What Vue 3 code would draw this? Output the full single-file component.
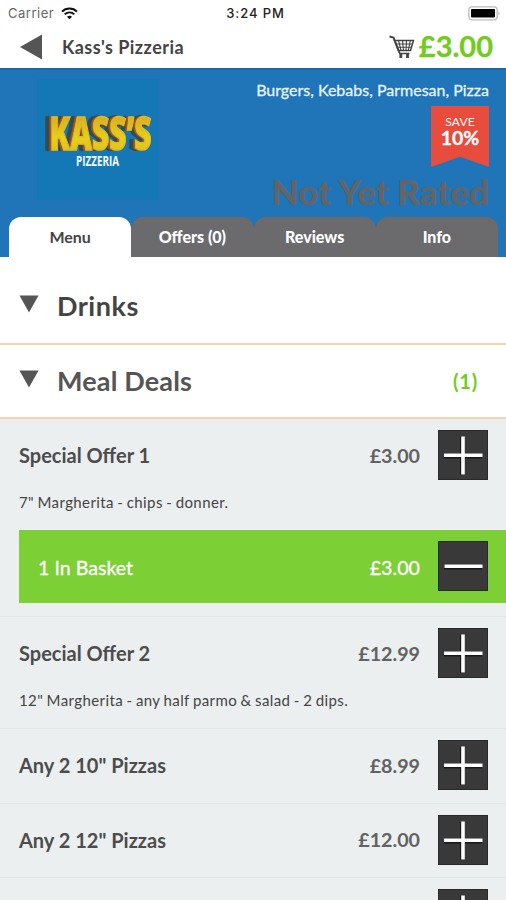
<script setup>
const tabs = ['Menu', 'Offers (0)', 'Reviews', 'Info']
const items = [
  { name: 'Special Offer 1', price: '£3.00', desc: '7" Margherita - chips - donner.', basket: 1 },
  { name: 'Special Offer 2', price: '£12.99', desc: '12" Margherita - any half parmo & salad - 2 dips.' },
  { name: 'Any 2 10" Pizzas', price: '£8.99' },
  { name: 'Any 2 12" Pizzas', price: '£12.00' },
  { name: '', price: '' },
]
</script>

<template>
  <div class="screen">
    <div class="status">
      <div class="carrier">
        <span>Carrier</span>
        <svg width="17" height="13" viewBox="0 0 17 13" fill="none" stroke="#111" stroke-width="2">
          <path d="M1 4.6C5 .4 12 .4 16 4.6" />
          <path d="M3.7 7.4c2.8-2.7 6.8-2.7 9.6 0" />
          <path d="M8.5 12.2 6 9.7c1.5-1.3 3.5-1.3 5 0z" fill="#111" stroke="none" />
        </svg>
      </div>
      <span class="time">3:24 PM</span>
      <svg class="battery" width="33" height="15" viewBox="0 0 33 15">
        <rect x=".8" y=".8" width="28.4" height="13" rx="3" fill="#fff" stroke="#bbb" stroke-width="1.3" />
        <rect x="3" y="3" width="24" height="8.6" rx="1" fill="#000" />
        <path d="M30.5 5.2q2 2 0 4z" fill="#aaa" />
      </svg>
    </div>

    <header class="nav">
      <svg width="24" height="26" viewBox="0 0 24 26"><path d="M1 13 23 .5v25z" fill="#555" /></svg>
      <h1>Kass's Pizzeria</h1>
      <svg class="cart" width="26" height="24" viewBox="0 0 26 24" fill="none" stroke="#444">
        <path d="M.5 1.5 4.5 2.5 10.5 18" stroke-width="2" />
        <path d="M5.5 5.5H24.5L21.5 15.5H9.5Z" stroke-width="1.5" />
        <path d="M6.5 9H23.5M8 12.3H22.5M9.5 5.5l2.5 10M13.5 5.5l1 10M17.5 5.5l-.5 10M21.3 5.5l-2 10" stroke-width="1.1" />
        <path d="M10 18.5H20.5" stroke-width="1.5" />
        <path d="M11.8 18.500v4.500M18.500 18.500v4.500" stroke-width="2.800" />
      </svg>
      <span class="total">£3.00</span>
    </header>

    <section class="hero">
      <div class="hero-top">
        <svg class="logo" width="121" height="121" viewBox="0 0 121 121">
          <defs>
            <linearGradient id="gold" x1="0" y1="0" x2="0" y2="1">
              <stop offset=".2" stop-color="#d9a823" />
              <stop offset=".6" stop-color="#e6cf1d" />
              <stop offset="1" stop-color="#dcb41f" />
            </linearGradient>
          </defs>
          <rect width="121" height="121" fill="#1478b6" />
          <text x="12.500" y="71" textLength="102" lengthAdjust="spacingAndGlyphs" class="kass">KASS’S</text>
          <text x="39" y="87" textLength="43" lengthAdjust="spacingAndGlyphs" class="sub">PIZZERIA</text>
        </svg>
        <div class="info">
          <p class="cuisine">Burgers, Kebabs, Parmesan, Pizza</p>
          <div class="ribbon"><span>SAVE</span><b>10%</b></div>
          <p class="rating">Not Yet Rated</p>
        </div>
      </div>
      <nav class="tabs">
        <div v-for="(t, i) in tabs" :key="t" class="tab" :class="{ active: i === 0 }"><span>{{ t }}</span></div>
      </nav>
    </section>

    <section class="category first">
      <svg width="20" height="18" viewBox="0 0 20 18"><path d="M.5.5h19L10 17.5z" fill="#555" /></svg>
      <h2 class="drinks">Drinks</h2>
    </section>
    <section class="category">
      <svg width="20" height="18" viewBox="0 0 20 18"><path d="M.5.5h19L10 17.5z" fill="#555" /></svg>
      <h2 class="deals">Meal Deals</h2>
      <span class="count">(1)</span>
    </section>

    <article v-for="(item, i) in items" :key="i" class="item">
      <div class="line">
        <h3>{{ item.name }}</h3>
        <span class="price">{{ item.price }}</span>
        <span class="btn">
          <svg width="50" height="50" viewBox="0 0 50 50"><path d="M6 26H44M24.5 7V45" stroke="#191919" stroke-width="5" /><path d="M6 25.3H44.5M25 6.5V44.5" stroke="#fff" stroke-width="3.6" /></svg>
        </span>
      </div>
      <p v-if="item.desc" class="desc">{{ item.desc }}</p>
      <div v-if="item.basket" class="basket">
        <span class="in">{{ item.basket }} In Basket</span>
        <span class="price">£3.00</span>
        <span class="btn">
          <svg width="50" height="50" viewBox="0 0 50 50"><path d="M6 26H44" stroke="#191919" stroke-width="5" /><path d="M6.5 25.3H44.5" stroke="#fff" stroke-width="3.6" /></svg>
        </span>
      </div>
    </article>
  </div>
</template>

<style>
body { margin: 0; overflow: hidden; }
</style>

<style scoped>
.screen { width: 506px; height: 900px; overflow: hidden; background: #fff; font-family: Lato, sans-serif; color: #444; }
svg { display: block; flex: none; }
h1, h2, h3, p { margin: 0; }
span, h1, h2, h3, p { white-space: nowrap; }
.status { height: 26px; display: grid; grid-template-columns: 1fr auto 1fr; align-items: center; padding: 0 5px 0 8px; box-sizing: border-box; font-family: Inter, sans-serif; font-size: 13px; }
.carrier { display: flex; align-items: center; gap: 7px; color: #666; letter-spacing: .5px; }
.time { color: #222; font-weight: 500; letter-spacing: .9px; padding-left: 2px; }
.battery { justify-self: end; }
.nav { height: 42px; display: flex; align-items: center; padding: 0 13px 0 19px; box-sizing: border-box; }
.nav h1 { margin-left: 19px; font-size: 18px; letter-spacing: .45px; font-weight: 700; flex: 1; }
.cart { margin-right: 4px; }
.total { font-size: 29px; line-height: 34px; padding-bottom: 2px; font-weight: 700; color: #72cc20; -webkit-text-stroke: .3px #72cc20; }
.hero { height: 189px; background: #1f75b7; box-sizing: border-box; border-top: 2px solid #116ba8; }
.hero-top { height: 147px; display: flex; justify-content: space-between; padding: 0 17px 0 37px; }
.logo { margin-top: 9px; }
.kass {
  font-family: "Open Sans", sans-serif; font-weight: 800; font-size: 46px; fill: url(#gold); stroke: #dfbb20; stroke-width: 1.4px;
  filter: drop-shadow(-1px .3px 0 #a95b18) drop-shadow(-1px .3px 0 #8d5420) drop-shadow(-2px .7px 0 #344b50) drop-shadow(-2px .7px 0 #344b50);
}
.sub { font-family: "Open Sans", sans-serif; font-weight: 700; font-size: 15px; fill: #f2f8ff; }
.info { display: flex; flex-direction: column; align-items: flex-end; color: #fff; }
.cuisine { margin-top: 10px; font-size: 16px; line-height: 20px; color: #e8f3fc; -webkit-text-stroke: .3px #e8f3fc; }
.ribbon { margin-top: 6px; width: 58px; height: 61px; background: #e74c3c; clip-path: polygon(0 0, 100% 0, 100% 100%, 50% 83%, 0 100%); display: flex; flex-direction: column; align-items: center; padding-top: 8px; box-sizing: border-box; }
.ribbon span { font-size: 12px; line-height: 16px; letter-spacing: .2px; }
.ribbon b { font-size: 19.5px; line-height: 16px; font-weight: 700; -webkit-text-stroke: .3px #fff; }
.rating { margin-top: 4px; font-size: 35px; line-height: 40px; font-weight: 900; color: #626467; }
.tabs { display: flex; height: 40px; padding: 0 8px 0 9px; }
.tab { flex: 1; border-radius: 12px 12px 0 0; background: #6b6b6d; color: #fff; font-weight: 900; font-size: 16px; display: flex; align-items: center; justify-content: center; padding: 0 0 1px 0; box-sizing: border-box; }
.tab.active { background: #fff; color: #444; font-weight: 700; }
.category { height: 74px; box-sizing: border-box; border-bottom: 2px solid #f8d2ad; display: flex; align-items: center; padding: 0 28px 0 19px; }
.category.first { height: 88px; padding-top: 11px; }
.category svg { margin-top: -4px; }
.category h2 { margin-left: 18px; font-size: 27px; line-height: 32px; font-weight: 700; flex: 1; letter-spacing: .15px; }
.category .drinks { letter-spacing: .5px; }
.deals { color: #555; }
.count { color: #72cc20; font-size: 20px; font-weight: 700; letter-spacing: .8px; }
.item { background: #ebeff0; padding: 11px 0 12px; border-bottom: 1px solid #e1e6e7; min-height: 74.5px; box-sizing: border-box; }
.line { height: 50px; display: flex; align-items: center; padding: 0 18px 0 19px; }
h3 { flex: 1; font-size: 20px; font-weight: 700; color: #4c4c4c; }
.price { font-size: 19.7px; font-weight: 700; color: #626262; margin-right: 18px; }
.btn { width: 50px; height: 50px; background: #393939; flex: none; box-shadow: inset 0 0 0 1px #292929; }
.desc { font-size: 15px; letter-spacing: .4px; word-spacing: -.8px; line-height: 20px; padding: 12px 19px 6px; color: #444; }
.basket { margin: 12px 0 1px 19px; height: 73px; background: #7cd036; display: flex; align-items: center; padding: 0 18px 1px 19px; box-sizing: border-box; color: #fff; font-size: 19.6px; }
.in, .basket .price { padding-top: 2px; -webkit-text-stroke: .3px #fff; }
.in { flex: 1; }
.basket .price { color: #fff; font-weight: 400; }
</style>
